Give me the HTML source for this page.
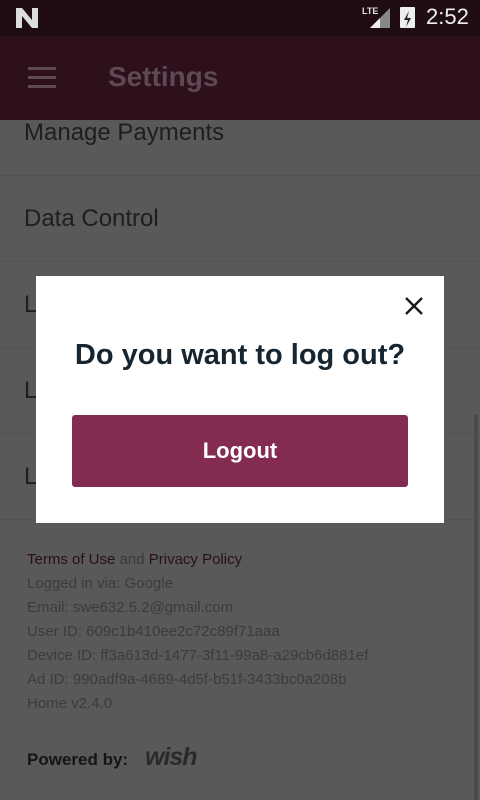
<!DOCTYPE html>
<html><head><meta charset="utf-8"><style>
body{margin:0;width:480px;height:800px;position:relative;overflow:hidden;background:#595959;font-family:"Liberation Sans",sans-serif}
.abs{position:absolute}
.sb{top:0;left:0;width:480px;height:36px;background:#1f0c15}
.tb{top:36px;left:0;width:480px;height:84px;background:#2e0f1c}
.item{left:24px;font-size:24px;color:#1e1e1e}
.div{left:0;width:480px;height:1px;background:#525252}
.ft{left:27px;font-size:15px;color:#3c3c3c}
</style></head><body>
<div class="abs sb"></div>
<svg class="abs" style="left:16px;top:8px" width="22" height="20" viewBox="0 0 22 20"><path d="M0 0h6l10 12V0h6v20h-6L6 8v12H0z" fill="#ddd"/></svg>
<div class="abs" style="left:362px;top:6px;font-size:9px;color:#ddd;font-weight:bold">LTE</div>
<svg class="abs" style="left:366px;top:8px" width="24" height="20"><path d="M24 0v20H4z" fill="#888"/><path d="M14 10v10H4z" fill="#eee"/></svg>
<div class="abs" style="left:400px;top:7px;width:15px;height:21px;background:#eee;border-radius:1px"></div>
<svg class="abs" style="left:400px;top:9px" width="15" height="19"><path d="M9 2L4 11h4l-2 7 5-9H7z" fill="#222"/></svg>
<div class="abs" style="left:426px;top:4px;font-size:22px;color:#eee">2:52</div>
<div class="abs tb"></div>
<div class="abs" style="left:28px;top:67px;width:28px;height:3px;background:#5d4a53;box-shadow:0 9px 0 #5d4a53,0 18px 0 #5d4a53"></div>
<div class="abs" style="left:108px;top:61px;font-size:28px;font-weight:bold;color:#5d4a53">Settings</div>
<div class="abs item" style="top:119px">Manage Payments</div>
<div class="abs div" style="top:175px"></div>
<div class="abs item" style="top:205px">Data Control</div>
<div class="abs div" style="top:261px"></div>
<div class="abs item" style="top:291px">L</div>
<div class="abs div" style="top:347px"></div>
<div class="abs item" style="top:377px">L</div>
<div class="abs div" style="top:433px"></div>
<div class="abs item" style="top:463px">L</div>
<div class="abs div" style="top:519px"></div>
<div class="abs" style="left:474px;top:415px;width:4px;height:385px;background:#4a4a4a"></div>
<div class="abs ft" style="top:551px"><span style="color:#2a0f1a">Terms of Use</span> and <span style="color:#2a0f1a">Privacy Policy</span></div>
<div class="abs ft" style="top:575px">Logged in via: Google</div>
<div class="abs ft" style="top:599px">Email: swe632.5.2@gmail.com</div>
<div class="abs ft" style="top:623px">User ID: 609c1b410ee2c72c89f71aaa</div>
<div class="abs ft" style="top:647px">Device ID: ff3a613d-1477-3f11-99a8-a29cb6d881ef</div>
<div class="abs ft" style="top:671px">Ad ID: 990adf9a-4689-4d5f-b51f-3433bc0a208b</div>
<div class="abs ft" style="top:695px">Home v2.4.0</div>
<div class="abs" style="left:27px;top:750px;font-size:17px;font-weight:bold;color:#151515">Powered by:</div>
<div class="abs" style="left:145px;top:743px;font-size:25px;font-weight:bold;font-style:italic;color:#2a2a2a;letter-spacing:-1px">wish</div>
<div class="abs" style="left:36px;top:276px;width:408px;height:247px;background:#fff"></div>
<svg class="abs" style="left:404px;top:296px" width="20" height="20"><path d="M2 2L18 18M18 2L2 18" stroke="#1a1a1a" stroke-width="2.4"/></svg>
<div class="abs" style="left:36px;top:339px;width:408px;text-align:center;font-size:29px;font-weight:bold;color:#16252f">Do you want to log out?</div>
<div class="abs" style="left:72px;top:415px;width:336px;height:72px;background:#832b51;border-radius:3px;color:#fff;font-size:22px;font-weight:bold;text-align:center;line-height:72px">Logout</div>
</body></html>
